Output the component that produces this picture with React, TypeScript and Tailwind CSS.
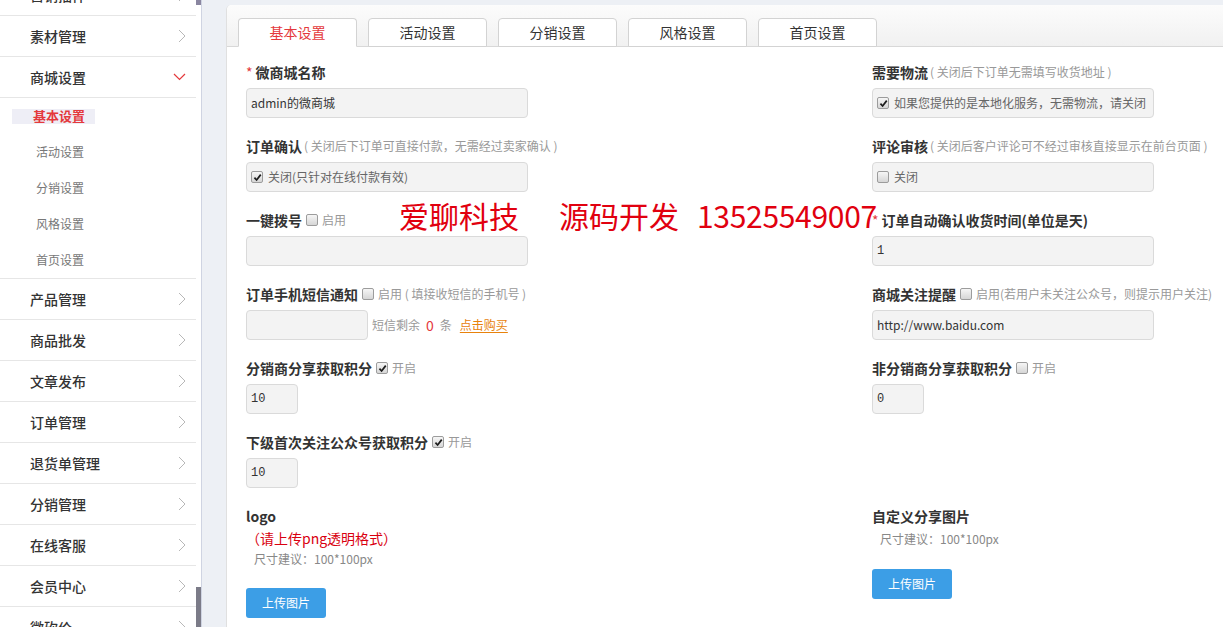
import React from 'react'

// sidebar menu data
const topItems = ['营销插件', '素材管理']
const subItems = ['基本设置', '活动设置', '分销设置', '风格设置', '首页设置']
const bottomItems = ['产品管理', '商品批发', '文章发布', '订单管理', '退货单管理', '分销管理', '在线客服', '会员中心', '微砍价']
const tabs = ['基本设置', '活动设置', '分销设置', '风格设置', '首页设置']

const Chevron = () => (
  <svg width="8" height="14" viewBox="0 0 8 14" className="shrink-0">
    <polyline points="1,1 7,7 1,13" fill="none" stroke="#b8b8b8" strokeWidth="1" />
  </svg>
)

const ChevronDown = () => (
  <svg width="13" height="8" viewBox="0 0 13 8" className="shrink-0">
    <polyline points="1,1 6.5,6.5 12,1" fill="none" stroke="#e4393c" strokeWidth="1.2" />
  </svg>
)

function NavRow({ label, open }: { label: string; open?: boolean }) {
  return (
    <div className="flex h-[41px] shrink-0 items-center justify-between border-b border-[#e6e6e6] pl-[30px] pr-[10px]">
      <span className="text-[14px] font-medium text-[#333]">{label}</span>
      {open ? <ChevronDown /> : <Chevron />}
    </div>
  )
}

function Check({ on }: { on?: boolean }) {
  return (
    <span className="inline-flex h-[12px] w-[12px] shrink-0 items-center justify-center rounded-[2px] border border-[#9c9c9c] bg-linear-to-b from-[#f6f6f6] to-[#d6d6d6]">
      {on && (
        <svg viewBox="0 0 10 10" className="h-[9px] w-[9px]">
          <path d="M1.6 5.2 L4 7.8 L8.6 1.8" stroke="#1d1d1d" strokeWidth="1.9" fill="none" />
        </svg>
      )}
    </span>
  )
}

function Label({ children, req }: { children: React.ReactNode; req?: boolean }) {
  return (
    <div className="flex h-[16px] items-center gap-[4px] whitespace-pre text-[14px] font-bold leading-[16px] text-[#333]">
      {req && <span className="-mr-[1px] font-normal text-[#e4393c]">*</span>}
      {children}
    </div>
  )
}

const Hint = ({ children, tight }: { children: React.ReactNode; tight?: boolean }) => (
  <span className={`text-[12px] font-normal text-[#999] ${tight ? '-ml-[2px]' : ''}`}>{children}</span>
)

function Box({ children, w = 'w-[282px]', mono }: { children?: React.ReactNode; w?: string; mono?: boolean }) {
  return (
    <div
      className={`mt-[8px] flex h-[30px] items-center gap-[5px] rounded-[4px] border border-[#dadada] bg-[#f3f3f3] px-[4px] text-[12px] text-[#333] ${w} ${
        mono ? "font-['Liberation_Mono',monospace]" : ''
      }`}
    >
      {children}
    </div>
  )
}

const Cell = ({ children }: { children?: React.ReactNode }) => <div className="h-[74px]">{children}</div>

export default function App() {
  return (
    <div className="flex h-[627px] w-[1223px] overflow-hidden bg-[#edf0f5] font-['Noto_Sans_CJK_SC','Noto_Sans',sans-serif]">
      {/* sidebar */}
      <aside className="flex w-[196px] shrink-0 flex-col bg-white">
        <div className="-mt-[25px] flex flex-col">
          {topItems.map((t) => (
            <NavRow key={t} label={t} />
          ))}
          <NavRow label="商城设置" open />
          <div className="flex h-[181px] flex-col border-b border-[#e6e6e6]">
            {subItems.map((t, i) =>
              i === 0 ? (
                <div key={t} className="flex h-[36px] items-center">
                  <span className="ml-[12px] flex h-[15px] w-[83px] items-center bg-[#eeeef6] pl-[21px] text-[13px] font-bold text-[#e4393c]">
                    {t}
                  </span>
                </div>
              ) : (
                <div key={t} className="flex h-[36px] items-center pl-[36px] text-[12px] text-[#777]">
                  {t}
                </div>
              ),
            )}
          </div>
          {bottomItems.map((t) => (
            <NavRow key={t} label={t} />
          ))}
        </div>
      </aside>

      {/* scrollbar */}
      <div className="flex w-[5px] shrink-0 flex-col justify-between bg-white">
        <div className="h-[5px] bg-[#8a86a0]" />
        <div className="h-[40px] bg-[#7b7b88]" />
      </div>
      <div className="w-[1px] shrink-0 bg-[#cfd4e2]" />

      {/* content */}
      <main className="relative flex-1 pl-[24px] pt-[5px]">
        <div className="h-full rounded-tl-[5px] border-l border-[#e0e0e0] bg-white">
          <div className="flex h-[42px] items-end gap-[11px] rounded-tl-[5px] border-b border-[#d8d8d8] bg-linear-to-b from-[#fcfcfc] to-[#f1f1f1] pl-[11px]">
            {tabs.map((t, i) => (
              <div
                key={t}
                className={`-mb-[1px] flex h-[29px] w-[119px] items-center justify-center rounded-t-[4px] border border-[#d3d3d3] bg-white text-[14px] ${
                  i === 0 ? 'border-b-white text-[#e4393c]' : 'text-[#333]'
                }`}
              >
                {t}
              </div>
            ))}
          </div>

          <div className="grid grid-cols-[626px_1fr] pl-[19px] pt-[17px]">
            <Cell>
              <Label req>微商城名称</Label>
              <Box>admin的微商城</Box>
            </Cell>
            <Cell>
              <Label>
                需要物流<Hint tight>( 关闭后下订单无需填写收货地址 )</Hint>
              </Label>
              <Box>
                <Check on />
                <span className="text-[#666]">如果您提供的是本地化服务，无需物流，请关闭</span>
              </Box>
            </Cell>

            <Cell>
              <Label>
                订单确认<Hint tight>( 关闭后下订单可直接付款，无需经过卖家确认 )</Hint>
              </Label>
              <Box>
                <Check on />
                <span className="text-[#666]">关闭(只针对在线付款有效)</span>
              </Box>
            </Cell>
            <Cell>
              <Label>
                评论审核<Hint tight>( 关闭后客户评论可不经过审核直接显示在前台页面 )</Hint>
              </Label>
              <Box>
                <Check />
                <span className="text-[#666]">关闭</span>
              </Box>
            </Cell>

            <Cell>
              <Label>
                一键拨号
                <Check />
                <Hint>启用</Hint>
              </Label>
              <Box />
            </Cell>
            <Cell>
              <Label req>订单自动确认收货时间(单位是天)</Label>
              <Box mono>1</Box>
            </Cell>

            <Cell>
              <Label>
                订单手机短信通知
                <Check />
                <Hint>启用 ( 填接收短信的手机号 )</Hint>
              </Label>
              <div className="flex items-end gap-[4px] text-[12px] text-[#999]">
                <Box w="w-[122px]" />
                <span className="flex h-[30px] items-center gap-[6px]">
                  短信剩余<span className="text-[14px] text-[#e4393c]">0</span>条
                  <span className="ml-[2px] text-[#e8820c] underline underline-offset-2">点击购买</span>
                </span>
              </div>
            </Cell>
            <Cell>
              <Label>
                商城关注提醒
                <Check />
                <Hint>启用(若用户未关注公众号，则提示用户关注)</Hint>
              </Label>
              <Box>http://www.baidu.com</Box>
            </Cell>

            <Cell>
              <Label>
                分销商分享获取积分
                <Check on />
                <Hint>开启</Hint>
              </Label>
              <Box w="w-[52px]" mono>
                10
              </Box>
            </Cell>
            <Cell>
              <Label>
                非分销商分享获取积分
                <Check />
                <Hint>开启</Hint>
              </Label>
              <Box w="w-[52px]" mono>
                0
              </Box>
            </Cell>

            <Cell>
              <Label>
                下级首次关注公众号获取积分
                <Check on />
                <Hint>开启</Hint>
              </Label>
              <Box w="w-[52px]" mono>
                10
              </Box>
            </Cell>
            <Cell />

            <div>
              <Label>logo</Label>
              <div className="mt-[4px] h-[20px] text-[14px] leading-[20px] text-[#d9000f]">（请上传png透明格式）</div>
              <div className="mt-[1px] h-[20px] pl-[8px] text-[12px] leading-[20px] text-[#888]">尺寸建议：100*100px</div>
              <button className="mt-[19px] h-[30px] w-[80px] rounded-[3px] bg-[#3c9ee6] text-[12px] text-white">上传图片</button>
            </div>
            <div>
              <Label>自定义分享图片</Label>
              <div className="mt-[5px] h-[20px] pl-[8px] text-[12px] leading-[20px] text-[#888]">尺寸建议：100*100px</div>
              <button className="mt-[20px] h-[30px] w-[80px] rounded-[3px] bg-[#3c9ee6] text-[12px] text-white">上传图片</button>
            </div>
          </div>
        </div>

        {/* watermark over the form */}
        <div className="pointer-events-none absolute left-[197px] top-[195px] flex whitespace-nowrap text-[30px] leading-[40px] text-[#e1000f]">
          <span className="mr-[40px]">爱聊科技</span>
          <span className="mr-[18px]">源码开发</span>
          <span className="tracking-[-0.3px]">13525549007</span>
        </div>
      </main>
    </div>
  )
}
